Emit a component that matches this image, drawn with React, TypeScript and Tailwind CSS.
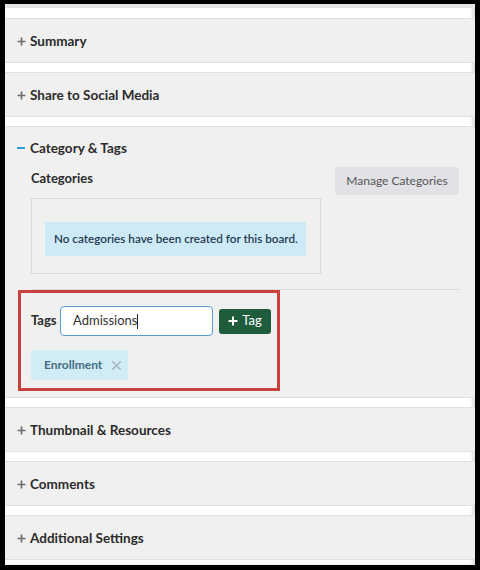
import { X } from "lucide-react";

type SectionProps = {
  title: string
}

function Plus() {
  return (
    <svg width="9" height="9" viewBox="0 0 9 9" className="shrink-0">
      <path d="M4.5 0.5v8M0.5 4.5h8" stroke="#6e6e6e" strokeWidth="1.7" />
    </svg>
  );
}

function CollapsedSection({ title }: SectionProps) {
  return (
    <div className="h-[45px] shrink-0 bg-[#f0f0f0] border-y border-[#e0dfe4] flex items-center gap-[4px] pl-[12px] pt-px">
      <Plus />
      <span className="text-[13.5px] font-bold text-[#2b2b2b]">{title}</span>
    </div>
  );
}

export default function App() {
  return (
    <div className="h-[570px] w-[480px] bg-black px-[5px] pt-[4px] pb-[5px] font-['Lato','Open_Sans',sans-serif]">
      <div className="h-full bg-white flex flex-col shadow-[inset_-3px_0_3px_rgba(0,0,0,0.12)]">
        <div className="h-[4px] bg-[#e6e6e9] shrink-0" />
        <div className="h-[10px] shrink-0" />
        <div className="flex flex-col gap-[9px]">
          <CollapsedSection title="Summary" />
          <CollapsedSection title="Share to Social Media" />

          <div className="bg-[#f0f0f0] border-y border-[#e0dfe4] pl-[26px] pr-[16px] pb-[6px]">
            <div className="h-[42px] flex items-center gap-[5px] -ml-[14px]">
              <span className="block w-[8px] h-[2.5px] bg-[#2f9fd8]" />
              <span className="text-[13.5px] font-bold text-[#2b2b2b]">Category &amp; Tags</span>
            </div>
            <div className="flex items-start justify-between">
              <div className="flex flex-col">
                <div className="text-[13px] font-bold text-[#2b2b2b] h-[18px] leading-[18px]">Categories</div>
                <div className="mt-[11px] w-[290px] h-[76px] border border-[#d9d9d9] pl-[13px] pt-[23px]">
                  <div className="w-[261px] h-[34px] bg-[#cdeaf6] flex items-center pl-[9px] text-[11.7px] font-semibold text-[#1f3a52] whitespace-nowrap">
                    No categories have been created for this board.
                  </div>
                </div>
              </div>
              <button className="mt-[-2px] h-[28px] w-[124px] rounded-[3px] bg-[#e2e2e6] text-[12px] text-[#555] whitespace-nowrap">
                Manage Categories
              </button>
            </div>
            <div className="mt-[15px] h-px bg-[#d9d9d9]" />
            <div className="-ml-[13px] w-[262px] border-[3px] border-[#c9413c] pl-[10px] pt-[13px] pb-[8px]">
              <div className="flex items-center">
                <span className="text-[13px] font-bold text-[#2b2b2b] w-[29px]">Tags</span>
                <div className="w-[153px] h-[30px] rounded-[4px] border border-[#5b9bd5] bg-white flex items-center pl-[12px] text-[13px] text-[#333]">
                  Admissions<span className="inline-block w-px h-[15px] bg-[#222]" />
                </div>
                <button className="ml-[6px] w-[52px] h-[25px] rounded-[3px] bg-[#1e5c3c] text-white flex items-center justify-center gap-[4px] text-[13px]">
                  <svg width="10" height="10" viewBox="0 0 10 10">
                    <path d="M5 0.5v9M0.5 5h9" stroke="#fff" strokeWidth="2" />
                  </svg>
                  Tag
                </button>
              </div>
              <div className="mt-[14px] w-[97px] h-[30px] bg-[#d2ecf6] flex items-center pl-[13px] gap-[7px]">
                <span className="text-[12px] font-bold text-[#3f6d84]">Enrollment</span>
                <X size={15} strokeWidth={2.2} className="text-[#a9b4ba]" />
              </div>
            </div>
          </div>

          <CollapsedSection title="Thumbnail & Resources" />
          <CollapsedSection title="Comments" />
          <CollapsedSection title="Additional Settings" />
        </div>
      </div>
    </div>
  );
}
